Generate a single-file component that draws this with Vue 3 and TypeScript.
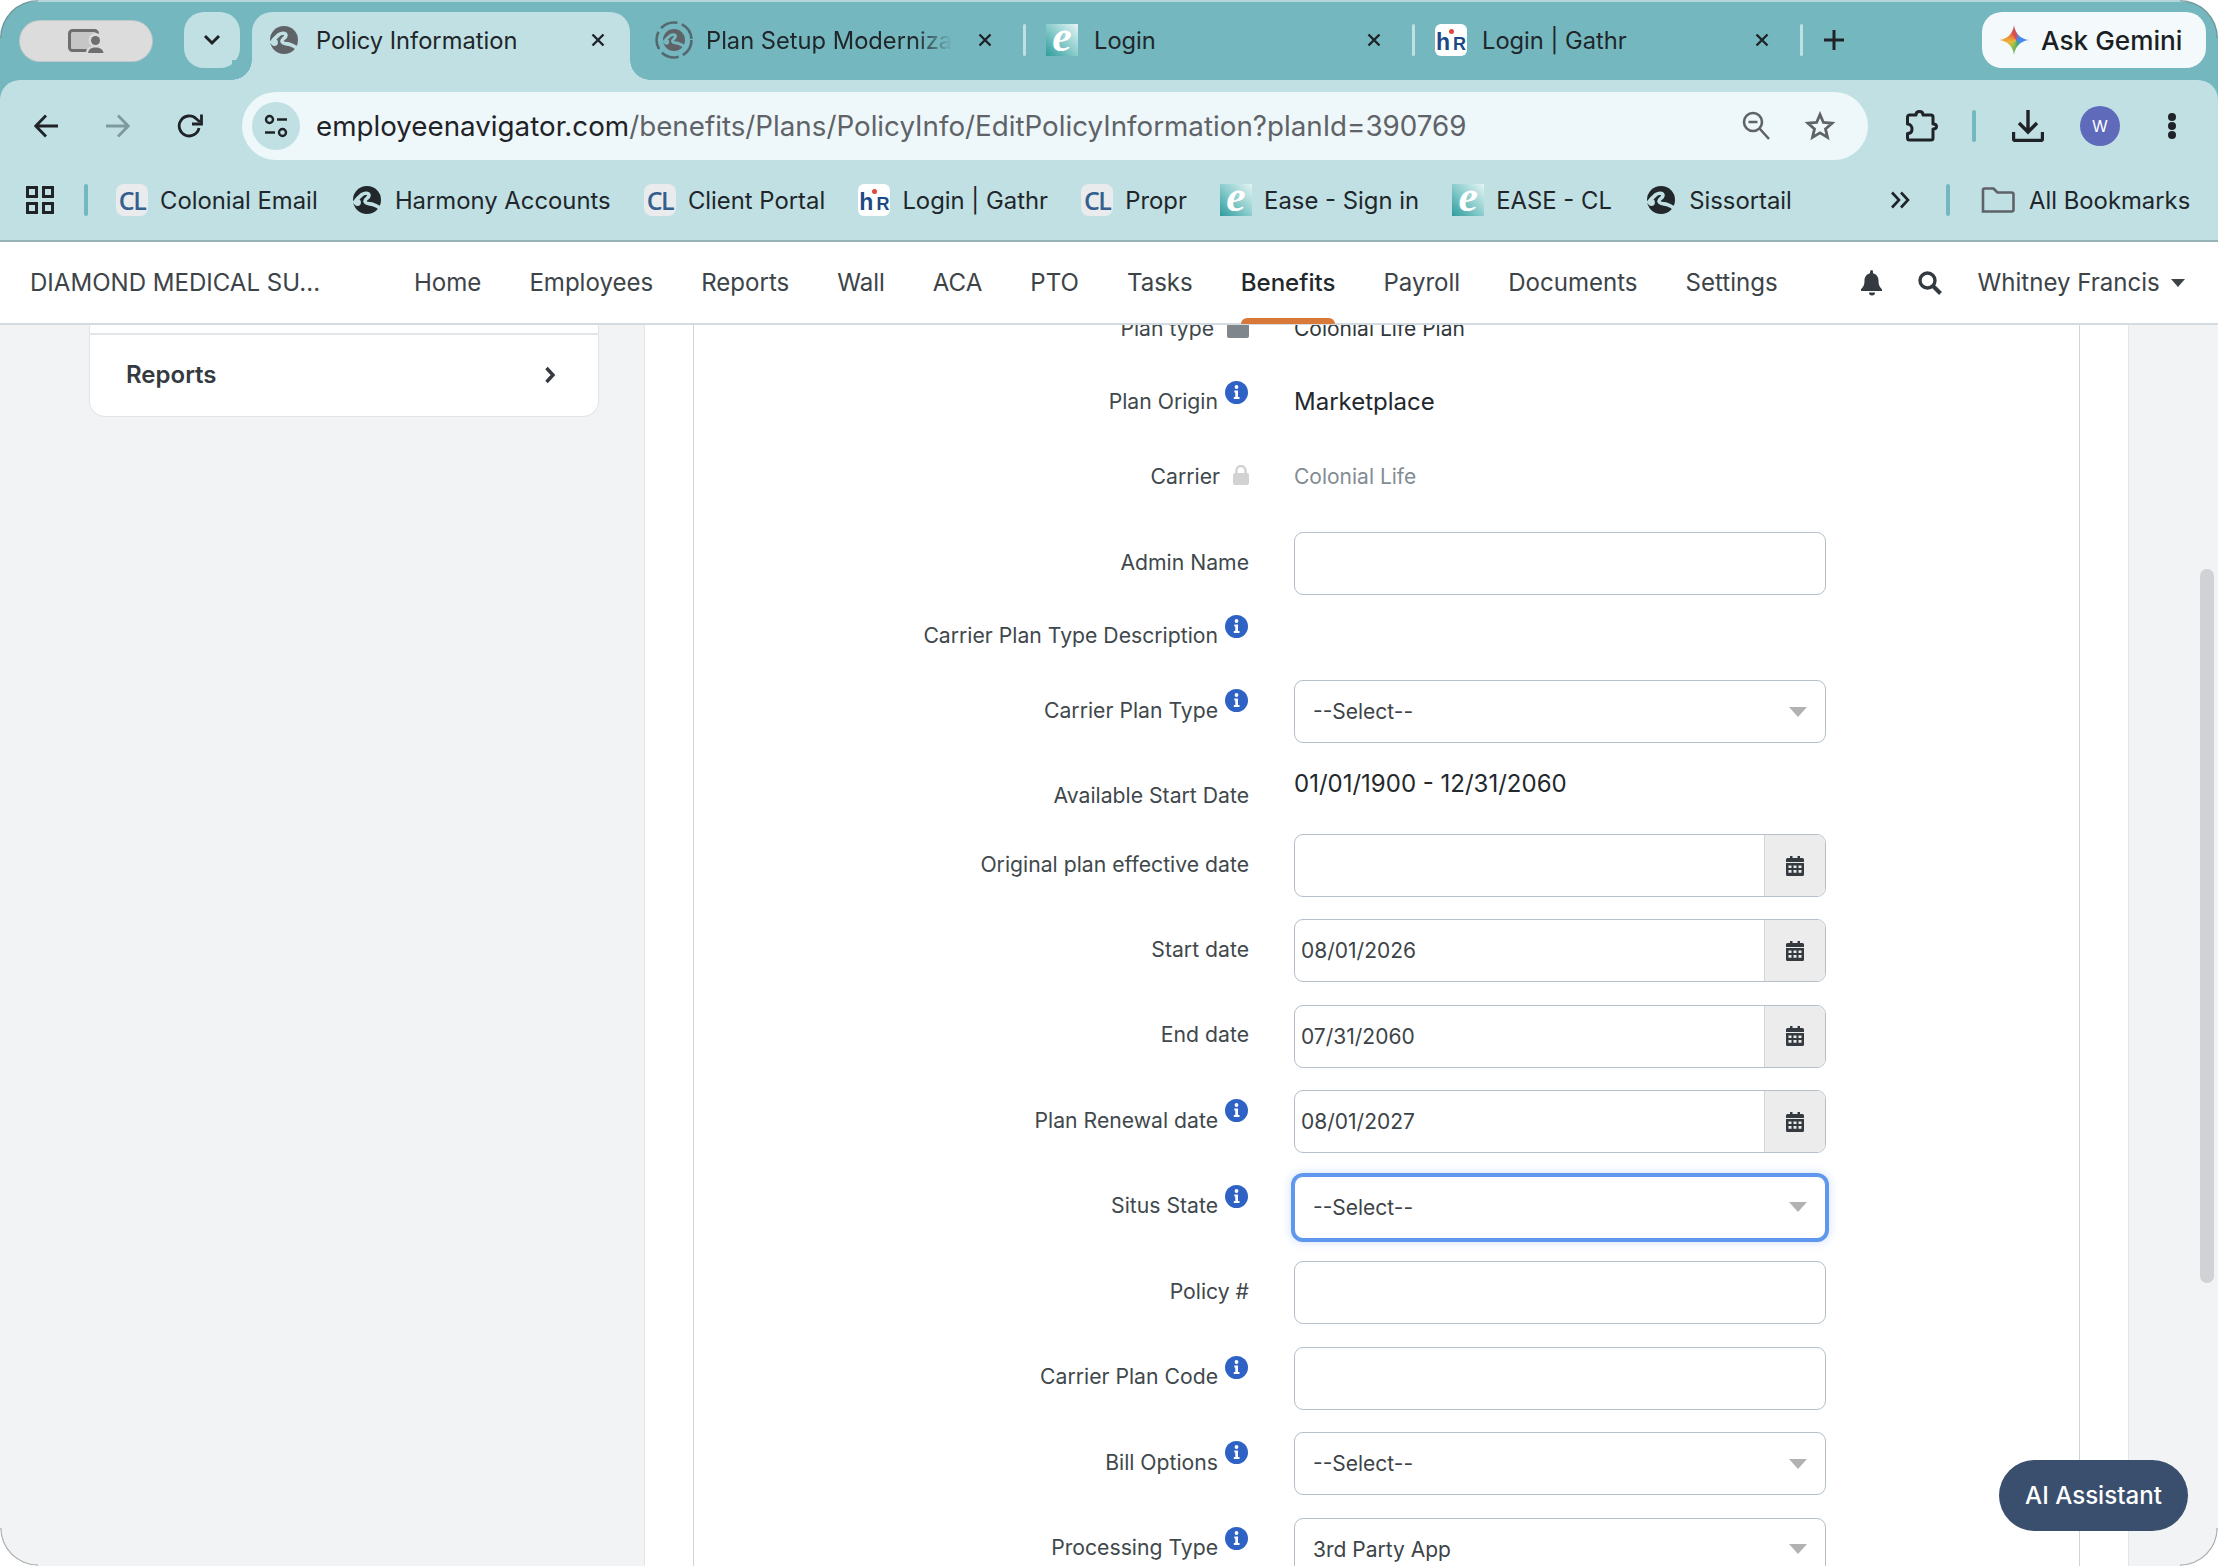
<script setup lang="ts">
interface Bookmark { label: string; icon: 'cl' | 'globe' | 'hr' | 'e' }
interface Field {
  label: string
  kind: 'plain' | 'input' | 'select' | 'date' | 'note' | 'none'
  value?: string
  info?: boolean
  cls?: string
}

const bookmarks: Bookmark[] = [
  { label: 'Colonial Email', icon: 'cl' },
  { label: 'Harmony Accounts', icon: 'globe' },
  { label: 'Client Portal', icon: 'cl' },
  { label: 'Login | Gathr', icon: 'hr' },
  { label: 'Propr', icon: 'cl' },
  { label: 'Ease - Sign in', icon: 'e' },
  { label: 'EASE - CL', icon: 'e' },
  { label: 'Sissortail', icon: 'globe' },
]

const navItems = ['Home', 'Employees', 'Reports', 'Wall', 'ACA', 'PTO', 'Tasks', 'Benefits', 'Payroll', 'Documents', 'Settings']

const fields: Field[] = [
  { label: 'Carrier Plan Type Description', kind: 'none', info: true, cls: 'r-desc' },
  { label: 'Carrier Plan Type', kind: 'select', value: '--Select--', info: true, cls: 'r-tight' },
  { label: 'Available Start Date', kind: 'note', value: '01/01/1900 - 12/31/2060', cls: 'r-avail' },
  { label: 'Original plan effective date', kind: 'date', value: '' },
  { label: 'Start date', kind: 'date', value: '08/01/2026' },
  { label: 'End date', kind: 'date', value: '07/31/2060' },
  { label: 'Plan Renewal date', kind: 'date', value: '08/01/2027', info: true },
  { label: 'Situs State', kind: 'select', value: '--Select--', info: true, cls: 'r-focus' },
  { label: 'Policy #', kind: 'input' },
  { label: 'Carrier Plan Code', kind: 'input', info: true },
  { label: 'Bill Options', kind: 'select', value: '--Select--', info: true },
  { label: 'Processing Type', kind: 'select', value: '3rd Party App', info: true },
]
</script>

<template>
  <div class="window">
    <svg class="defs" width="0" height="0" aria-hidden="true">
      <defs>
        <symbol id="globe" viewBox="0 0 28 28">
          <circle cx="14" cy="14" r="14" fill="currentColor" />
          <path d="M0.500 17.500C3 14 6 11 9 8.500 12 6.500 16 7 16 9.500 16 12 11.500 13 12 15.500 12.500 18 17 17.500 20 18.500 23 19.500 25 20.500 27.500 22.500" fill="none" stroke="var(--gl)" stroke-width="3.600" />
          <circle cx="4.500" cy="16.500" r="3.400" fill="var(--gl)" />
        </symbol>
      </defs>
    </svg>

    <!-- tab strip -->
    <header class="tabstrip">
      <div class="profile-pill">
        <svg width="36" height="24" viewBox="0 0 36 24">
          <rect x="1.500" y="1.500" width="28" height="20" rx="3" fill="#c6c6c6" stroke="#6f6f6f" stroke-width="3" />
          <circle cx="27.500" cy="11" r="7" fill="#dcdcdc" />
          <path d="M18 24c0-5 3.500-7 9.500-7s8.500 2 8.500 7z" fill="#dcdcdc" />
          <circle cx="27.500" cy="11.500" r="4.500" fill="#6f6f6f" />
          <path d="M20 24c.500-3.800 3.500-5.500 7.500-5.500S35 20.200 35.500 24z" fill="#6f6f6f" />
        </svg>
      </div>
      <div class="tab-search">
        <svg width="18" height="12" viewBox="0 0 18 12"><path d="M2 2l7 7 7-7" fill="none" stroke="#1e2226" stroke-width="3" /></svg>
      </div>
      <div class="tab active">
        <svg class="fav g" width="28" height="28" style="--gl:#c1e0e3"><use href="#globe" /></svg>
        <span class="tab-title">Policy Information</span>
        <svg class="tab-x" width="16" height="16" viewBox="0 0 16 16"><path d="M2.500 2.500l11 11m0-11l-11 11" stroke="#1f2327" stroke-width="2.400" /></svg>
      </div>
      <div class="tab t2">
        <svg class="fav2" width="38" height="38" viewBox="0 0 38 38">
          <circle cx="19" cy="19" r="17.500" fill="none" stroke="#53686f" stroke-width="2.600" stroke-dasharray="18 4.500" />
          <g style="--gl:#74b7bf" color="#5f6368"><use href="#globe" x="8" y="8" width="22" height="22" /></g>
        </svg>
        <span class="tab-title fade">Plan Setup Moderniza</span>
        <svg class="tab-x" width="16" height="16" viewBox="0 0 16 16"><path d="M2.500 2.500l11 11m0-11l-11 11" stroke="#1f2327" stroke-width="2.400" /></svg>
      </div>
      <i class="tab-sep"></i>
      <div class="tab t3">
        <span class="fav-e"><i>e</i></span>
        <span class="tab-title">Login</span>
        <svg class="tab-x" width="16" height="16" viewBox="0 0 16 16"><path d="M2.500 2.500l11 11m0-11l-11 11" stroke="#1f2327" stroke-width="2.400" /></svg>
      </div>
      <i class="tab-sep"></i>
      <div class="tab t4">
        <span class="fav-hr"><b>h</b><b class="r">R</b><u></u></span>
        <span class="tab-title">Login | Gathr</span>
        <svg class="tab-x" width="16" height="16" viewBox="0 0 16 16"><path d="M2.500 2.500l11 11m0-11l-11 11" stroke="#1f2327" stroke-width="2.400" /></svg>
      </div>
      <i class="tab-sep"></i>
      <svg class="plus" width="20" height="20" viewBox="0 0 20 20"><path d="M10 0v20M0 10h20" stroke="#1f2327" stroke-width="3" /></svg>
      <div class="gemini">
        <i class="gem"></i>
        <span>Ask Gemini</span>
      </div>
    </header>

    <!-- toolbar -->
    <section class="toolbar">
      <div class="nav-row">
        <svg class="tb back" width="24" height="24" viewBox="0 0 24 24"><path d="M24 12H2.500M12 1.500L1.800 12 12 22.500" fill="none" stroke="#1f2327" stroke-width="2.800" /></svg>
        <svg class="tb fwd" width="24" height="24" viewBox="0 0 24 24"><path d="M0 12h21.500M12 1.500L22.200 12 12 22.500" fill="none" stroke="#7f9a9f" stroke-width="2.800" /></svg>
        <svg class="tb reload" width="26" height="26" viewBox="0 0 26 26"><path d="M22 15a10 10 0 1 1-2.800-9.200L23 9" fill="none" stroke="#1f2327" stroke-width="2.800" /><path d="M24.500 1.500v9.500H15" fill="none" stroke="#1f2327" stroke-width="2.800" /></svg>
        <div class="omnibox">
          <span class="site-info">
            <svg width="24" height="24" viewBox="0 0 24 24" fill="none" stroke="#1f2327" stroke-width="2.400"><circle cx="5.500" cy="5.500" r="3.500" /><path d="M13 5.500h10M1 18.500h10" /><circle cx="18.500" cy="18.500" r="3.500" /></svg>
          </span>
          <span class="url"><b>employeenavigator.com</b><em>/benefits/Plans/PolicyInfo/EditPolicyInformation?planId=390769</em></span>
          <svg class="zoom-ic" width="28" height="30" viewBox="0 0 28 30" fill="none" stroke="#5f6368" stroke-width="2.600"><circle cx="11" cy="11" r="9" /><path d="M6.500 11h9M17.500 17.500L27 28" /></svg>
          <svg class="star" width="30" height="30" viewBox="0 0 30 30"><path d="M15 3.500l3.400 8 8.600.7-6.500 5.700 2 8.500-7.500-4.500-7.500 4.500 2-8.500L3 12.200l8.600-.7z" fill="none" stroke="#5f6368" stroke-width="2.800" /></svg>
        </div>
        <svg class="ext" width="32" height="32" viewBox="0 0 32 32"><path d="M1.500 7a2 2 0 0 1 2-2H10c0-2.500 1.500-3.500 3.500-3.500S17 2.500 17 5h8a2 2 0 0 1 2 2v7c2.500 0 3.500 1 3.500 2.500S29.500 19 27 19v9a2 2 0 0 1-2 2H3.500a2 2 0 0 1-2-2v-4.500c3 0 4.500-2 4.500-4.500s-1.500-5-4.500-5z" fill="none" stroke="#1f2327" stroke-width="3" stroke-linejoin="round" /></svg>
        <i class="tb-sep"></i>
        <svg class="dl" width="32" height="32" viewBox="0 0 32 32"><path d="M16 0v21M7 13l9 9 9-9" fill="none" stroke="#1f2327" stroke-width="3.400" /><path d="M1.500 22v6.500a2 2 0 0 0 2 2h25a2 2 0 0 0 2-2V22" fill="none" stroke="#1f2327" stroke-width="3.400" /></svg>
        <span class="avatar">W</span>
        <span class="dots"><i></i><i></i><i></i></span>
      </div>
      <div class="bookmarks">
        <span class="apps"><i></i><i></i><i></i><i></i></span>
        <i class="bm-sep first"></i>
        <div class="bm-list">
          <div v-for="b in bookmarks" :key="b.label" class="bm">
            <span v-if="b.icon === 'cl'" class="fav-cl">CL</span>
            <svg v-else-if="b.icon === 'globe'" class="bm-globe" width="28" height="28" style="--gl:#c1e0e3"><use href="#globe" /></svg>
            <span v-else-if="b.icon === 'hr'" class="fav-hr"><b>h</b><b class="r">R</b><u></u></span>
            <span v-else class="fav-e"><i>e</i></span>
            <span>{{ b.label }}</span>
          </div>
        </div>
        <svg class="more" width="20" height="18" viewBox="0 0 20 18"><path d="M2 1.500L9 9l-7 7.500M11 1.500L18 9l-7 7.500" fill="none" stroke="#1f2327" stroke-width="2.600" /></svg>
        <i class="bm-sep"></i>
        <div class="bm all">
          <svg width="34" height="26" viewBox="0 0 34 26"><path d="M2 24.500V3a1.500 1.500 0 0 1 1.500-1.500h9l4 4h14a2 2 0 0 1 2 2v15a2 2 0 0 1-2 2z" fill="none" stroke="#5f6368" stroke-width="2.600" /></svg>
          <span>All Bookmarks</span>
        </div>
      </div>
    </section>

    <!-- app nav -->
    <nav class="appnav">
      <div class="company">DIAMOND MEDICAL SU...</div>
      <ul class="menu">
        <li v-for="n in navItems" :key="n" :class="{ current: n === 'Benefits' }">{{ n }}</li>
      </ul>
      <svg class="bell" width="22" height="26" viewBox="0 0 22 26"><path d="M11 0a2 2 0 0 0-2 2v1.200C5.500 4 3.500 7 3.500 10.500c0 5-1.500 6.500-3.500 8.800V21h21v-1.700c-2-2.300-3.500-3.800-3.500-8.800 0-3.500-2-6.500-5.500-7.300V2a2 2 0 0 0-1.000-2zM8 22.500a3 3 0 0 0 6 0z" fill="#343a40" /></svg>
      <svg class="search" width="24" height="24" viewBox="0 0 24 24"><circle cx="9.500" cy="9.500" r="7.500" fill="none" stroke="#343a40" stroke-width="3.400" /><path d="M15 15l7.500 7.500" stroke="#343a40" stroke-width="4" /></svg>
      <div class="user">Whitney Francis<span class="caret"></span></div>
    </nav>

    <!-- page -->
    <main class="page">
      <aside class="sidebar">
        <div class="side-card">
          <div class="side-head"></div>
          <div class="side-row">
            <span>Reports</span>
            <svg width="12" height="18" viewBox="0 0 12 18"><path d="M2.500 2L9 9l-6.500 7" fill="none" stroke="#343a40" stroke-width="3.400" /></svg>
          </div>
        </div>
      </aside>
      <section class="panel">
        <div class="card">
          <div class="row r-type">
            <div class="lbl"><span class="lbl-gap">Plan type</span><svg class="mini" width="22" height="14" viewBox="0 0 22 14"><rect width="22" height="14" y="0" rx="2" fill="#7f868c" /></svg></div>
            <div class="val text readonly-dark">Colonial Life Plan</div>
          </div>
          <div class="row r-origin">
            <div class="lbl"><span>Plan Origin</span><svg class="info" width="23" height="23" viewBox="0 0 23 23"><circle cx="11.500" cy="11.500" r="11.500" fill="#2e62c5" /><path d="M9.300 9.500h3.700v6.500h1.500v2H8.800v-2h1.500v-4.500H9.300z" fill="#fff" /><circle cx="11.500" cy="6" r="1.900" fill="#fff" /></svg></div>
            <div class="val big">Marketplace</div>
          </div>
          <div class="row r-carrier">
            <div class="lbl"><span class="lbl-gap2">Carrier</span><svg class="lock" width="16" height="20" viewBox="0 0 16 20"><path d="M3.500 9V5.500a4.500 4.500 0 0 1 9 0V9" fill="none" stroke="#d2d2d2" stroke-width="2.400" /><rect y="8" width="16" height="12" rx="2" fill="#d2d2d2" /></svg></div>
            <div class="val text muted">Colonial Life</div>
          </div>
          <div class="row r-admin lift">
            <div class="lbl"><span>Admin Name</span></div>
            <div class="ctl box"></div>
          </div>

          <div v-for="f in fields" :key="f.label" class="row" :class="[f.cls, { lift: f.kind === 'select' || f.kind === 'date' || f.kind === 'input' }]">
            <div class="lbl">
              <span>{{ f.label }}</span>
              <svg v-if="f.info" class="info" width="23" height="23" viewBox="0 0 23 23"><circle cx="11.500" cy="11.500" r="11.500" fill="#2e62c5" /><path d="M9.300 9.500h3.700v6.500h1.500v2H8.800v-2h1.500v-4.500H9.300z" fill="#fff" /><circle cx="11.500" cy="6" r="1.900" fill="#fff" /></svg>
            </div>
            <div v-if="f.kind === 'note'" class="val big note">{{ f.value }}</div>
            <div v-else-if="f.kind === 'select'" class="ctl box select">
              <span>{{ f.value }}</span>
              <i class="tri"></i>
            </div>
            <div v-else-if="f.kind === 'date'" class="ctl box date">
              <span class="date-val">{{ f.value }}</span>
              <span class="addon">
                <svg width="18" height="20" viewBox="0 0 18 20"><path d="M4 0h2.500v3H4zM11.500 0H14v3h-2.500z" fill="#343a40" /><path d="M1.500 2H16.500A1.500 1.500 0 0 1 18 3.500V6H0V3.500A1.500 1.500 0 0 1 1.500 2z" fill="#343a40" /><path fill-rule="evenodd" d="M0 7h18v11.500a1.500 1.500 0 0 1-1.500 1.500h-15A1.500 1.500 0 0 1 0 18.500zM2.500 9.500v2.500h3V9.500zm5 0v2.500h3V9.500zm5 0v2.500h3V9.500zm-10 4.500v2.800h3V14zm5 0v2.800h3V14zm5 0v2.800h3V14z" fill="#343a40" /></svg>
              </span>
            </div>
            <div v-else-if="f.kind === 'input'" class="ctl box"></div>
          </div>
        </div>
      </section>
      <aside class="gutter"><span class="thumb"></span></aside>
      <button class="ai" type="button">AI Assistant</button>
    </main>
  </div>
</template>

<style>
html, body { margin: 0; background: #fff; }
</style>

<style scoped>
.window {
  position: relative;
  width: 2218px;
  height: 1566px;
  border-radius: 38px;
  overflow: hidden;
  display: flex;
  flex-direction: column;
  font-family: Inter, "Liberation Sans", sans-serif;
  color: #1f2327;
  background: #f1f3f5;
}
.window::after {
  content: "";
  position: absolute;
  inset: 0;
  z-index: 10;
  border-radius: 38px;
  pointer-events: none;
  box-shadow: inset 0 0 0 1.500px rgba(120, 125, 125, .55);
  -webkit-mask:
    linear-gradient(#000 0 0) 0 0 / 38px 38px no-repeat,
    linear-gradient(#000 0 0) 100% 0 / 38px 38px no-repeat,
    linear-gradient(#000 0 0) 0 100% / 38px 38px no-repeat,
    linear-gradient(#000 0 0) 100% 100% / 38px 38px no-repeat;
  mask:
    linear-gradient(#000 0 0) 0 0 / 38px 38px no-repeat,
    linear-gradient(#000 0 0) 100% 0 / 38px 38px no-repeat,
    linear-gradient(#000 0 0) 0 100% / 38px 38px no-repeat,
    linear-gradient(#000 0 0) 100% 100% / 38px 38px no-repeat;
}
.defs { position: absolute; }

/* tab strip */
.tabstrip {
  height: 80px;
  flex: none;
  box-sizing: border-box;
  border-top: 2px solid #b4d6da;
  display: flex;
  align-items: flex-start;
  padding: 10px 0 0 20px;
  font-size: 23.700px;
  position: relative;
  z-index: 2;
}
.profile-pill {
  width: 132px;
  height: 40px;
  margin-top: 9px;
  border-radius: 20px;
  background: #dcdcdc;
  box-shadow: 0 0 0 1px #bdc9cb;
  display: flex;
  align-items: center;
  justify-content: center;
}
.tab-search {
  width: 56px;
  height: 56px;
  margin-left: 32px;
  border-radius: 20px;
  background: #c1e0e3;
  display: flex;
  align-items: center;
  justify-content: center;
}
.tab {
  display: flex;
  align-items: center;
  height: 56px;
  position: relative;
  flex: none;
}
.tab.active {
  width: 378px;
  height: 68px;
  margin-left: 12px;
  padding: 0 0 12px 18px;
  box-sizing: border-box;
  background: #c1e0e3;
  border-radius: 20px 20px 0 0;
}
.tab.active::before, .tab.active::after {
  content: "";
  position: absolute;
  bottom: 0;
  width: 20px;
  height: 20px;
}
.tab.active::before {
  left: -20px;
  background: radial-gradient(circle at 0 0, #74b7bf 19.500px, #c1e0e3 20px);
}
.tab.active::after {
  right: -20px;
  background: radial-gradient(circle at 100% 0, #74b7bf 19.500px, #c1e0e3 20px);
}
.fav { color: #5f6368; flex: none; }
.tab-title { margin-left: 18px; white-space: nowrap; color: #20262a; }
.tab .tab-x { position: absolute; }
.active .tab-x { left: 338px; top: 20px; }
.t2 { width: 368px; margin-left: 25px; }
.fav2 { flex: none; }
.t2 .tab-title { margin-left: 13px; width: 246px; overflow: hidden; -webkit-mask-image: linear-gradient(90deg, #000 85%, transparent 100%); mask-image: linear-gradient(90deg, #000 85%, transparent 100%); }
.t2 .tab-x { left: 322px; top: 20px; }
.tab-sep { flex: none; width: 3px; height: 32px; margin-top: 12px; border-radius: 2px; background: #c1e0e3; }
.t3 { width: 366px; margin-left: 20px; }
.t3 .tab-title { margin-left: 16px; }
.t3 .tab-x { left: 320px; top: 20px; }
.t4 { width: 365px; margin-left: 20px; }
.t4 .tab-title { margin-left: 15px; }
.t4 .tab-x { left: 319px; top: 20px; }
.plus { margin: 18px 0 0 21px; flex: none; }

.fav-e {
  flex: none;
  width: 32px;
  height: 32px;
  display: flex;
  align-items: center;
  justify-content: center;
  background: linear-gradient(45deg, #2f9c9c 0%, #82c8c8 45%, #e6f5f5 100%);
}
.fav-e i {
  color: #fff;
  font: italic 700 44px "Liberation Serif", serif;
  line-height: 30px;
  margin-top: -6px;
}
.fav-hr {
  flex: none;
  width: 32px;
  height: 32px;
  background: #fff;
  border-radius: 6px;
  display: flex;
  align-items: flex-end;
  justify-content: center;
  padding-bottom: 3px;
  box-sizing: border-box;
  position: relative;
  font: 700 23px "Liberation Sans", sans-serif;
  color: #1c4a86;
  line-height: 22px;
}
.fav-hr b { font-weight: 700; }
.fav-hr .r { font-size: 18px; margin-left: 3px; line-height: 18px; }
.fav-hr u {
  position: absolute;
  left: 14px;
  top: 5px;
  width: 5px;
  height: 5px;
  border-radius: 50%;
  background: #e0483e;
}
.fav-cl {
  flex: none;
  width: 32px;
  height: 32px;
  border-radius: 8px;
  background: #e9ebec;
  color: #33608f;
  font: 600 25px "Open Sans", sans-serif;
  letter-spacing: -1.500px;
  display: flex;
  align-items: center;
  justify-content: center;
}
.gemini {
  position: absolute;
  left: 1982px;
  top: 10px;
  width: 224px;
  height: 56px;
  box-sizing: border-box;
  padding-left: 17px;
  border-radius: 20px;
  background: #f4f9fb;
  display: flex;
  align-items: center;
  gap: 12px;
  font-size: 26.200px;
  font-weight: 500;
  color: #1b1f23;
}
.gem {
  flex: none;
  width: 30px;
  height: 30px;
  background: conic-gradient(from -20deg at 58% 50%, #de4a44 0deg, #4a86f0 60deg, #4a86f0 130deg, #47a86a 190deg, #a9c04a 235deg, #efb53a 275deg, #e8853a 320deg, #de4a44 360deg);
  clip-path: path("M15 0C16 8 21 14 30 15C21 16 16 22 15 30C14 22 9 16 0 15C9 14 14 8 15 0Z");
}

/* toolbar */
.toolbar {
  height: 162px;
  flex: none;
  box-sizing: border-box;
  background: #c1e0e3;
  border-bottom: 2px solid #96b4b6;
  border-radius: 20px 20px 0 0;
  position: relative;
  z-index: 1;
}
.window::before {
  content: "";
  position: absolute;
  left: 0;
  top: 0;
  width: 100%;
  height: 110px;
  background: #74b7bf;
}
.nav-row {
  height: 80px;
  display: flex;
  align-items: center;
  padding-top: 12px;
  box-sizing: border-box;
}
.tb { flex: none; }
.back { margin-left: 34px; }
.fwd { margin-left: 48px; }
.reload { margin-left: 47px; }
.omnibox {
  margin-left: 39px;
  width: 1626px;
  height: 68px;
  flex: none;
  border-radius: 34px;
  background: #eef7f9;
  display: flex;
  align-items: center;
  position: relative;
}
.site-info {
  width: 48px;
  height: 48px;
  margin-left: 10px;
  border-radius: 50%;
  background: #c1e0e3;
  display: flex;
  align-items: center;
  justify-content: center;
  flex: none;
}
.url { margin-left: 16px; font-size: 27.750px; white-space: nowrap; }
.url b { font-weight: 400; color: #1f2327; }
.url em { font-style: normal; color: #5f6368; }
.zoom-ic { position: absolute; left: 1500px; top: 19px; }
.star { position: absolute; left: 1563px; top: 19px; }
.ext { margin-left: 38px; flex: none; }
.tb-sep { flex: none; width: 4px; height: 32px; margin-left: 34px; border-radius: 2px; background: #74b7bf; }
.dl { margin-left: 36px; flex: none; }
.avatar {
  flex: none;
  width: 40px;
  height: 40px;
  margin-left: 36px;
  border-radius: 50%;
  background: #5f6abb;
  color: #fff;
  font-size: 16px;
  display: flex;
  align-items: center;
  justify-content: center;
}
.dots { margin-left: 48px; display: flex; flex-direction: column; gap: 1px; flex: none; }
.dots i { width: 8px; height: 8px; border-radius: 50%; background: #1f2327; }

.bookmarks {
  height: 40px;
  padding: 20px 0 0 26px;
  display: flex;
  align-items: center;
  font-size: 23.850px;
  color: #20262a;
}
.apps {
  flex: none;
  width: 28px;
  height: 28px;
  display: grid;
  grid-template-columns: 1fr 1fr;
  gap: 4px;
}
.apps i { border: 3px solid #1f2327; }
.bm-sep { flex: none; width: 4px; height: 32px; border-radius: 2px; background: #74b7bf; margin-left: 36px; }
.bm-sep.first { margin-left: 30px; }
.bm-list { display: flex; gap: 33.200px; margin-left: 28px; width: 1675px; flex: none; }
.bm { display: flex; align-items: center; gap: 12px; white-space: nowrap; flex: none; }
.bm-globe { color: #22272b; flex: none; margin-left: 2px; margin-right: 2px; }
.more { flex: none; margin-left: 99px; }
.bm.all { margin-left: 31px; gap: 14px; }

/* app navigation */
.appnav {
  height: 83px;
  flex: none;
  box-sizing: border-box;
  background: #fff;
  border-bottom: 2px solid #d5dce1;
  display: flex;
  align-items: center;
  position: relative;
  z-index: 3;
  font-size: 24.050px;
  color: #3c4448;
  padding-left: 30px;
}
.company { width: 384px; flex: none; white-space: nowrap; }
.menu { display: flex; gap: 48px; list-style: none; margin: 0; padding: 0; height: 100%; align-items: stretch; }
.menu li { position: relative; white-space: nowrap; display: flex; align-items: center; }
.menu li.current { color: #22282c; font-weight: 500; }
.menu li.current::after {
  content: "";
  position: absolute;
  left: 0;
  right: 0;
  bottom: -1px;
  height: 6px;
  border-radius: 6px 6px 0 0;
  background: #d8793a;
}
.bell { margin-left: 83px; flex: none; }
.search { margin-left: 35px; flex: none; }
.user { margin-left: 36px; white-space: nowrap; display: flex; align-items: center; }
.caret {
  margin-left: 11px;
  width: 0;
  height: 0;
  border: 7px solid transparent;
  border-top: 8px solid #3c4448;
  border-bottom: 0;
}

/* page */
.page {
  flex: 1;
  min-height: 0;
  display: flex;
  overflow: hidden;
  position: relative;
}
.sidebar { width: 644px; flex: none; box-sizing: border-box; padding-left: 89px; }
.side-card {
  width: 510px;
  height: 92px;
  box-sizing: border-box;
  background: #fff;
  border: 1px solid #e2e5e8;
  border-top: 0;
  border-radius: 0 0 16px 16px;
}
.side-head { height: 8px; border-bottom: 2px solid #e3e6e9; }
.side-row {
  height: 79px;
  display: flex;
  align-items: center;
  justify-content: space-between;
  padding: 0 42px 0 36px;
  font-size: 24px;
  font-weight: 600;
  color: #343a40;
}
.panel {
  width: 1485px;
  flex: none;
  box-sizing: border-box;
  background: #fff;
  border-left: 1px solid #e3e6e9;
  border-right: 1px solid #e3e6e9;
  padding-left: 48px;
}
.card {
  width: 1387px;
  box-sizing: border-box;
  border-left: 1px solid #ced4da;
  border-right: 1px solid #ced4da;
  margin-top: -21px;
}
.row {
  display: grid;
  grid-template-columns: 555px 532px;
  column-gap: 45px;
  height: 63px;
  margin-bottom: 22.450px;
  align-items: center;
  font-size: 21.200px;
  color: #40484c;
}
.lbl { display: flex; justify-content: flex-end; align-items: center; white-space: nowrap; }
.lift .lbl { transform: translateY(-2px); }
.info { flex: none; margin-left: 8px; transform: translate(-1px, -9px); }
.lbl-gap { margin-right: 13px; }
.lbl-gap2 { margin-right: 13px; }
.mini { flex: none; transform: translateY(3px); }
.lock { flex: none; transform: translateY(-1px); }
.r-type { height: 48px; margin-bottom: 22px; }
.r-origin { height: 54px; margin-bottom: 22px; }
.r-carrier { height: 52px; margin-bottom: 30px; }
.r-admin { margin-bottom: 20px; }
.r-desc { height: 40px; margin-bottom: 25px; }
.r-tight { margin-bottom: 22px; }
.r-avail { height: 47px; margin-bottom: 22px; }
.r-avail .lbl { transform: translateY(6px); }
.r-avail .val { transform: translateY(-5px); }
.val { white-space: nowrap; }
.val.big { font-size: 24px; color: #22282c; }
.val.text { font-size: 21px; }
.val.muted { color: #838c93; }
.readonly-dark { color: #30373b; }
.box {
  height: 63px;
  box-sizing: border-box;
  border: 1px solid #b4bfca;
  border-radius: 9px;
  background: #fff;
}
.select {
  display: flex;
  align-items: center;
  justify-content: space-between;
  padding: 0 18px;
  font-size: 21px;
  color: #3c4448;
}
.tri {
  width: 0;
  height: 0;
  border-left: 9px solid transparent;
  border-right: 9px solid transparent;
  border-top: 10px solid #b2b2b2;
}
.date { display: flex; align-items: stretch; overflow: hidden; font-size: 21px; color: #3c4448; }
.date-val { flex: 1; padding-left: 6px; align-self: center; }
.addon {
  width: 61px;
  flex: none;
  background: #ececec;
  border-left: 1px solid #d2d6da;
  display: flex;
  align-items: center;
  justify-content: center;
  padding-right: 1px;
  box-sizing: border-box;
}
.r-focus .box {
  border-color: #5f97ee;
  box-shadow: 0 0 0 3px #5f97ee, 0 0 8px 4px rgba(95, 151, 238, .25);
}
.gutter { flex: 1; position: relative; background: #f1f3f5; }
.thumb {
  position: absolute;
  left: 71px;
  top: 244px;
  width: 14px;
  height: 714px;
  border-radius: 7px;
  background: #d0d2d5;
}
.ai {
  position: absolute;
  left: 1999px;
  top: 1135px;
  width: 189px;
  height: 71px;
  border: 0;
  border-radius: 36px;
  background: #3a4f6e;
  color: #fff;
  font: 500 24.100px Inter, sans-serif;
  padding: 0;
}
</style>
